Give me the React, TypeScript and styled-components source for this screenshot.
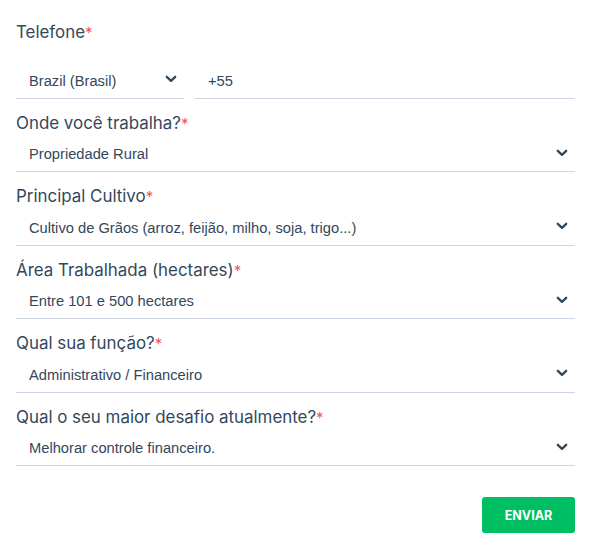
import React from 'react'
import styled, { createGlobalStyle } from 'styled-components'

const GlobalStyle = createGlobalStyle`
  body {
    margin: 0;
    background: #ffffff;
    font-family: Inter, "Open Sans", sans-serif;
    color: #33475b;
  }
`

const Form = styled.form`
  width: 559px;
  padding: 20px 0 0 16px;
`

const Label = styled.label`
  display: block;
  height: 24px;
  font-size: 16.9px;
  line-height: 24px;
  color: #33475b;
`

const Required = styled.span`
  color: #f2545b;
  font-size: 15px;
  line-height: 1;
`

const Field = styled.div`
  margin-top: 12px;
`

const PhoneRow = styled.div`
  display: flex;
  gap: 11px;
  margin-top: 17px;
`

const SelectBox = styled.div<{ $width?: number }>`
  display: flex;
  align-items: center;
  justify-content: space-between;
  height: 37.5px;
  padding: 3px 7px 0 13px;
  border-bottom: 1px solid #cbd6e2;
  font-family: "Liberation Sans", Arial, sans-serif;
  font-size: 14.7px;
  color: #33475b;
  box-sizing: border-box;
  ${({ $width }) => ($width ? `width: ${$width}px; flex: none;` : 'flex: 1;')}

  svg {
    margin-top: -3px;
  }
`

const Input = styled.div`
  flex: 1;
  display: flex;
  align-items: center;
  height: 37.5px;
  padding: 3px 0 0 13px;
  box-sizing: border-box;
  border-bottom: 1px solid #cbd6e2;
  font-family: "Liberation Sans", Arial, sans-serif;
  font-size: 14.7px;
  color: #33475b;
`

const Actions = styled.div`
  display: flex;
  justify-content: flex-end;
  margin-top: 31px;
`

const SubmitButton = styled.button.attrs({ type: 'submit' })`
  width: 93px;
  height: 36px;
  border: none;
  border-radius: 3px;
  background: #00bf63;
  color: #ffffff;
  font-family: Inter, "Open Sans", sans-serif;
  font-weight: 700;
  font-size: 12.5px;
  cursor: pointer;
`

const Chevron = () => (
  <svg width="12" height="8" viewBox="0 0 12 8" fill="none">
    <path d="M1.8 1.8 6 5.8 10.2 1.8" stroke="#33475b" strokeWidth="2.3" strokeLinecap="round" strokeLinejoin="round" />
  </svg>
)

const fields = [
  { label: 'Onde você trabalha?', value: 'Propriedade Rural' },
  { label: 'Principal Cultivo', value: 'Cultivo de Grãos (arroz, feijão, milho, soja, trigo...)' },
  { label: 'Área Trabalhada (hectares)', value: 'Entre 101 e 500 hectares' },
  { label: 'Qual sua função?', value: 'Administrativo / Financeiro' },
  { label: 'Qual o seu maior desafio atualmente?', value: 'Melhorar controle financeiro.' },
]

export default function App() {
  return (
    <>
      <GlobalStyle />
      <Form onSubmit={(e) => e.preventDefault()}>
        <Label>
          Telefone<Required>*</Required>
        </Label>
        <PhoneRow>
          <SelectBox $width={168}>
            <span>Brazil (Brasil)</span>
            <Chevron />
          </SelectBox>
          <Input>+55</Input>
        </PhoneRow>
        {fields.map((f) => (
          <Field key={f.label}>
            <Label>
              {f.label}
              <Required>*</Required>
            </Label>
            <SelectBox>
              <span>{f.value}</span>
              <Chevron />
            </SelectBox>
          </Field>
        ))}
        <Actions>
          <SubmitButton>ENVIAR</SubmitButton>
        </Actions>
      </Form>
    </>
  )
}
